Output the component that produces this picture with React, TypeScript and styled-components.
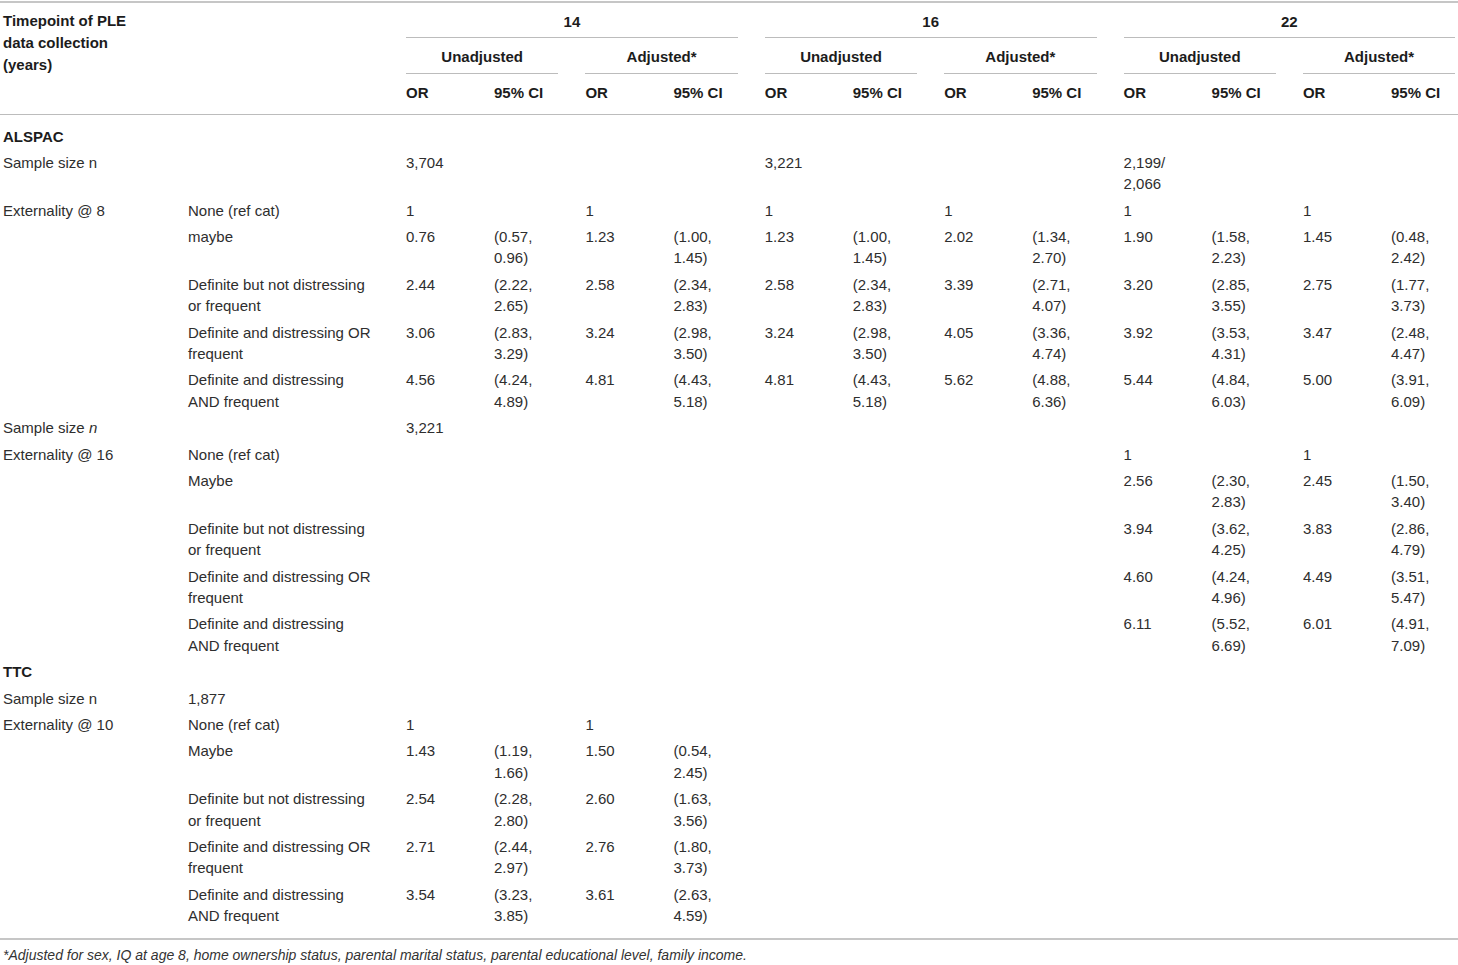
import React from "react";
import styled, { createGlobalStyle } from "styled-components";

const GlobalStyle = createGlobalStyle`
  html, body {
    margin: 0;
    padding: 0;
    background: #ffffff;
    overflow: hidden;
  }
  body {
    font-family: "Liberation Sans", Arial, Helvetica, sans-serif;
    color: #2e2e2e;
  }
`;

const Page = styled.div`
  width: 1458px;
  padding-top: 1px;
`;

const Table = styled.table`
  width: 1458px;
  table-layout: fixed;
  border-collapse: collapse;
  border-top: 2px solid #c6c6c6;
  border-bottom: 2px solid #c6c6c6;
`;

const Col = styled.col<{ $w: number }>`
  width: ${(p) => p.$w}px;
`;

const CornerHead = styled.th`
  padding: 7px 3px 0;
  font-size: 15px;
  line-height: 22px;
  font-weight: 700;
  color: #1c1c1c;
  text-align: left;
  vertical-align: top;
  white-space: pre-line;
  border-bottom: 1px solid #bcbcbc;
`;

const SpanHead = styled.th<{ $pt: number }>`
  padding: ${(p) => p.$pt}px 0 0;
  font-size: 15px;
  line-height: 22px;
  font-weight: 700;
  color: #1c1c1c;
  text-align: center;
  vertical-align: top;
`;

const Rule = styled.div<{ $last?: boolean; $pb: number }>`
  margin: 0 ${(p) => (p.$last ? 3 : 24)}px 0 3px;
  padding-bottom: ${(p) => p.$pb}px;
  border-bottom: 1px solid #bcbcbc;
`;

const LeafHead = styled.th`
  padding: 8px 3px 10px;
  font-size: 15px;
  line-height: 22px;
  font-weight: 700;
  color: #1c1c1c;
  text-align: left;
  vertical-align: top;
  white-space: nowrap;
  border-bottom: 1px solid #bcbcbc;
`;

const Row = styled.tr`
  &:first-child td {
    padding-top: 10.5px;
  }
  &:last-child td {
    padding-bottom: 11px;
  }
`;

const Cell = styled.td`
  padding: 2.45px 3px 2.4px;
  font-size: 15px;
  line-height: 21.5px;
  color: #2e2e2e;
  text-align: left;
  vertical-align: top;
  white-space: pre-line;
`;

const SectionCell = styled(Cell)`
  font-weight: 700;
  color: #1c1c1c;
`;

const Footnote = styled.p`
  margin: 0;
  padding: 6px 3px 0;
  font-size: 14px;
  line-height: 18px;
  font-style: italic;
  color: #333333;
`;

const colWidths = [185, 218, 88, 91.4, 88, 91.4, 88, 91.4, 88, 91.4, 88, 91.4, 88, 70];

type DataRow =
  | { kind: "section"; title: string }
  | { kind: "data"; label: React.ReactNode; sub: string; cells: string[] };

const E = "";
const ci = (a: string, b: string) => `(${a},\n${b})`;

const rows: DataRow[] = [
  { kind: "section", title: "ALSPAC" },
  {
    kind: "data",
    label: "Sample size n",
    sub: E,
    cells: ["3,704", E, E, E, "3,221", E, E, E, "2,199/\n2,066", E, E, E],
  },
  {
    kind: "data",
    label: "Externality @ 8",
    sub: "None (ref cat)",
    cells: ["1", E, "1", E, "1", E, "1", E, "1", E, "1", E],
  },
  {
    kind: "data",
    label: E,
    sub: "maybe",
    cells: [
      "0.76", ci("0.57", "0.96"), "1.23", ci("1.00", "1.45"),
      "1.23", ci("1.00", "1.45"), "2.02", ci("1.34", "2.70"),
      "1.90", ci("1.58", "2.23"), "1.45", ci("0.48", "2.42"),
    ],
  },
  {
    kind: "data",
    label: E,
    sub: "Definite but not distressing\nor frequent",
    cells: [
      "2.44", ci("2.22", "2.65"), "2.58", ci("2.34", "2.83"),
      "2.58", ci("2.34", "2.83"), "3.39", ci("2.71", "4.07"),
      "3.20", ci("2.85", "3.55"), "2.75", ci("1.77", "3.73"),
    ],
  },
  {
    kind: "data",
    label: E,
    sub: "Definite and distressing OR\nfrequent",
    cells: [
      "3.06", ci("2.83", "3.29"), "3.24", ci("2.98", "3.50"),
      "3.24", ci("2.98", "3.50"), "4.05", ci("3.36", "4.74"),
      "3.92", ci("3.53", "4.31"), "3.47", ci("2.48", "4.47"),
    ],
  },
  {
    kind: "data",
    label: E,
    sub: "Definite and distressing\nAND frequent",
    cells: [
      "4.56", ci("4.24", "4.89"), "4.81", ci("4.43", "5.18"),
      "4.81", ci("4.43", "5.18"), "5.62", ci("4.88", "6.36"),
      "5.44", ci("4.84", "6.03"), "5.00", ci("3.91", "6.09"),
    ],
  },
  {
    kind: "data",
    label: (
      <>
        Sample size <i>n</i>
      </>
    ),
    sub: E,
    cells: ["3,221", E, E, E, E, E, E, E, E, E, E, E],
  },
  {
    kind: "data",
    label: "Externality @ 16",
    sub: "None (ref cat)",
    cells: [E, E, E, E, E, E, E, E, "1", E, "1", E],
  },
  {
    kind: "data",
    label: E,
    sub: "Maybe",
    cells: [E, E, E, E, E, E, E, E, "2.56", ci("2.30", "2.83"), "2.45", ci("1.50", "3.40")],
  },
  {
    kind: "data",
    label: E,
    sub: "Definite but not distressing\nor frequent",
    cells: [E, E, E, E, E, E, E, E, "3.94", ci("3.62", "4.25"), "3.83", ci("2.86", "4.79")],
  },
  {
    kind: "data",
    label: E,
    sub: "Definite and distressing OR\nfrequent",
    cells: [E, E, E, E, E, E, E, E, "4.60", ci("4.24", "4.96"), "4.49", ci("3.51", "5.47")],
  },
  {
    kind: "data",
    label: E,
    sub: "Definite and distressing\nAND frequent",
    cells: [E, E, E, E, E, E, E, E, "6.11", ci("5.52", "6.69"), "6.01", ci("4.91", "7.09")],
  },
  { kind: "section", title: "TTC" },
  {
    kind: "data",
    label: "Sample size n",
    sub: "1,877",
    cells: [E, E, E, E, E, E, E, E, E, E, E, E],
  },
  {
    kind: "data",
    label: "Externality @ 10",
    sub: "None (ref cat)",
    cells: ["1", E, "1", E, E, E, E, E, E, E, E, E],
  },
  {
    kind: "data",
    label: E,
    sub: "Maybe",
    cells: ["1.43", ci("1.19", "1.66"), "1.50", ci("0.54", "2.45"), E, E, E, E, E, E, E, E],
  },
  {
    kind: "data",
    label: E,
    sub: "Definite but not distressing\nor frequent",
    cells: ["2.54", ci("2.28", "2.80"), "2.60", ci("1.63", "3.56"), E, E, E, E, E, E, E, E],
  },
  {
    kind: "data",
    label: E,
    sub: "Definite and distressing OR\nfrequent",
    cells: ["2.71", ci("2.44", "2.97"), "2.76", ci("1.80", "3.73"), E, E, E, E, E, E, E, E],
  },
  {
    kind: "data",
    label: E,
    sub: "Definite and distressing\nAND frequent",
    cells: ["3.54", ci("3.23", "3.85"), "3.61", ci("2.63", "4.59"), E, E, E, E, E, E, E, E],
  },
];

const timepoints = ["14", "16", "22"];

export default function App() {
  return (
    <Page>
      <GlobalStyle />
      <Table>
        <colgroup>
          {colWidths.map((w, i) => (
            <Col key={i} $w={w} />
          ))}
        </colgroup>
        <thead>
          <tr>
            <CornerHead rowSpan={3} colSpan={2}>
              {"Timepoint of PLE\ndata collection\n(years)"}
            </CornerHead>
            {timepoints.map((t, i) => (
              <SpanHead key={t} colSpan={4} $pt={8}>
                <Rule $pb={4} $last={i === timepoints.length - 1}>
                  {t}
                </Rule>
              </SpanHead>
            ))}
          </tr>
          <tr>
            {timepoints.map((t, i) =>
              ["Unadjusted", "Adjusted*"].map((lab, j) => (
                <SpanHead key={t + lab} colSpan={2} $pt={8}>
                  <Rule $pb={5} $last={i === timepoints.length - 1 && j === 1}>
                    {lab}
                  </Rule>
                </SpanHead>
              ))
            )}
          </tr>
          <tr>
            {Array.from({ length: 6 }).map((_, i) => (
              <React.Fragment key={i}>
                <LeafHead>OR</LeafHead>
                <LeafHead>95% CI</LeafHead>
              </React.Fragment>
            ))}
          </tr>
        </thead>
        <tbody>
          {rows.map((r, i) =>
            r.kind === "section" ? (
              <Row key={i}>
                <SectionCell colSpan={14}>{r.title}</SectionCell>
              </Row>
            ) : (
              <Row key={i}>
                <Cell>{r.label}</Cell>
                <Cell>{r.sub}</Cell>
                {r.cells.map((c, j) => (
                  <Cell key={j}>{c}</Cell>
                ))}
              </Row>
            )
          )}
        </tbody>
      </Table>
      <Footnote>
        *Adjusted for sex, IQ at age 8, home ownership status, parental marital status, parental
        educational level, family income.
      </Footnote>
    </Page>
  );
}
